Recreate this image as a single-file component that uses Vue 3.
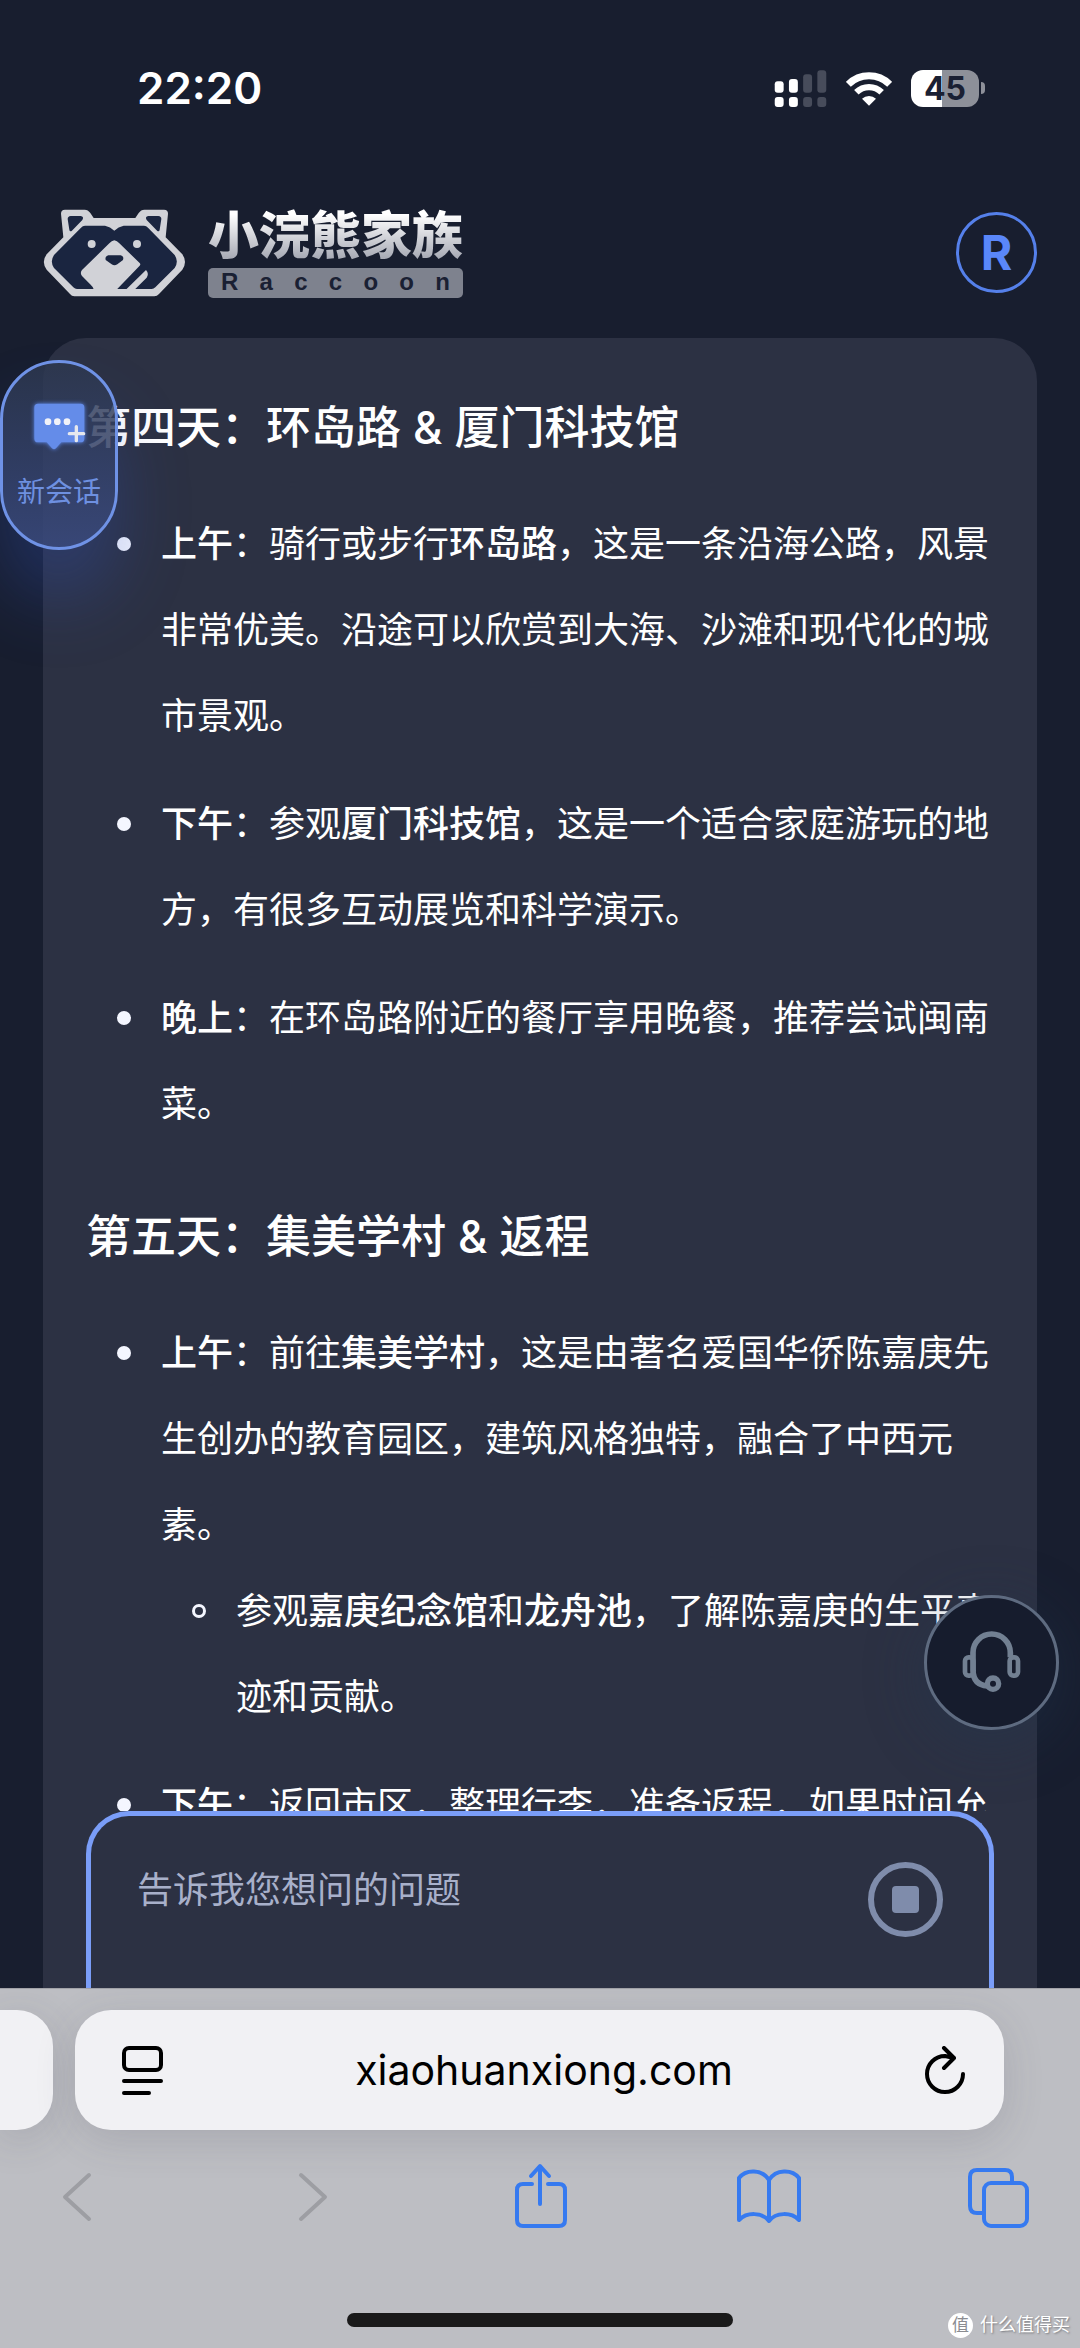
<script setup>
import { ref } from 'vue'

const question = ref('')
const brandLetters = 'Raccoon'.split('')

const days = [
  {
    title: '第四天：环岛路 & 厦门科技馆',
    items: [
      {
        parts: [
          { text: '上午', strong: true },
          { text: '：骑行或步行' },
          { text: '环岛路', strong: true },
          { text: '，这是一条沿海公路，风景非常优美。沿途可以欣赏到大海、沙滩和现代化的城市景观。' },
        ],
      },
      {
        parts: [
          { text: '下午', strong: true },
          { text: '：参观' },
          { text: '厦门科技馆', strong: true },
          { text: '，这是一个适合家庭游玩的地方，有很多互动展览和科学演示。' },
        ],
      },
      {
        parts: [
          { text: '晚上', strong: true },
          { text: '：在环岛路附近的餐厅享用晚餐，推荐尝试闽南菜。' },
        ],
      },
    ],
  },
  {
    title: '第五天：集美学村 & 返程',
    items: [
      {
        parts: [
          { text: '上午', strong: true },
          { text: '：前往' },
          { text: '集美学村', strong: true },
          { text: '，这是由著名爱国华侨陈嘉庚先生创办的教育园区，建筑风格独特，融合了中西元素。' },
        ],
        children: [
          [
            { text: '参观' },
            { text: '嘉庚纪念馆', strong: true },
            { text: '和' },
            { text: '龙舟池', strong: true },
            { text: '，了解陈嘉庚的生平事迹和贡献。' },
          ],
        ],
      },
      {
        parts: [
          { text: '下午', strong: true },
          { text: '：返回市区，整理行李，准备返程，如果时间允' },
        ],
      },
    ],
  },
]
</script>

<template>
  <div class="screen">
    <div class="status">
      <time class="clock">22:20</time>
      <div class="indicators">
        <svg class="signal" viewBox="102 56 160 112" aria-hidden="true">
          <g fill="#fff">
            <rect x="104" y="90" width="27" height="35" rx="9" />
            <rect x="147" y="83" width="27" height="42" rx="9" />
            <rect x="104" y="138" width="27" height="30" rx="9" />
            <rect x="147" y="138" width="27" height="30" rx="9" />
          </g>
          <g fill="#474c5b">
            <rect x="190" y="69" width="27" height="56" rx="9" />
            <rect x="233" y="57" width="27" height="68" rx="9" />
            <rect x="190" y="138" width="27" height="30" rx="9" />
            <rect x="233" y="138" width="27" height="30" rx="9" />
          </g>
        </svg>
        <svg class="wifi" viewBox="318 58 138 105" aria-hidden="true">
          <path d="M325 98a88 88 0 0 1 124 0" fill="none" stroke="#fff" stroke-width="21" />
          <path d="M349 122a54 54 0 0 1 76 0" fill="none" stroke="#fff" stroke-width="19" />
          <path d="M387 162l-21-21a31 31 0 0 1 42 0z" fill="#fff" />
        </svg>
        <div class="battery">
          <span class="level">45</span>
          <span class="cap"></span>
        </div>
      </div>
    </div>

    <header class="header">
      <a class="brand" href="#" aria-label="小浣熊家族">
        <svg class="logo" viewBox="40 56 429 264" aria-hidden="true">
          <path fill="#d1d2d7" d="M94 70Q94 58 106 58H165Q175 58 182 68L192 83H317L327 68Q334 58 344 58H403Q415 58 415 70L408 141L458 192Q474 215 458 238L388 311Q382 318 374 318H134Q126 318 121 311L51 238Q34 215 51 192L101 141Z" />
          <g fill="#1a2540">
            <path d="M123 77H153Q164 79 158 89L126 122Q120 125 119 118L114 86Q114 78 123 77Z" />
            <path d="M386 77H356Q345 79 351 89L383 122Q389 125 390 118L395 86Q395 78 386 77Z" />
            <path d="M166 106H226Q242 109 254 121Q266 109 282 106H343Q350 106 355 112L435 194Q448 214 435 233L377 291Q372 296 366 296H142Q136 296 131 291L73 233Q60 214 73 194L154 112Q159 106 166 106Z" />
          </g>
          <path fill="#d1d2d7" d="M254 150Q262 151 269 159L330 218Q334 222 330 226L262 297H192Q191 290 183 283L157 257Q150 248 157 239L239 159Q246 151 254 150ZM349 239Q359 249 351 262L316 297H290Z" />
          <path fill="#1a2540" d="M236 195H273Q284 198 280 209L263 222Q254 228 246 222L228 209Q225 198 236 195Z" />
          <circle cx="186" cy="161" r="12" fill="#d1d2d7" />
          <circle cx="322" cy="161" r="12" fill="#d1d2d7" />
        </svg>
        <span class="names">
          <span class="name">小浣熊家族</span>
          <span class="latin">
            <span v-for="(letter, i) in brandLetters" :key="i">{{ letter }}</span>
          </span>
        </span>
      </a>
      <button class="avatar" type="button" aria-label="账户">R</button>
    </header>

    <main class="main">
      <section class="card">
        <div class="messages">
          <article v-for="day in days" :key="day.title" class="day">
            <h3>{{ day.title }}</h3>
            <ul class="list">
              <li v-for="(item, i) in day.items" :key="i">
                <div class="body">
                  <p><template v-for="(part, j) in item.parts" :key="j"><strong v-if="part.strong">{{ part.text }}</strong><template v-else>{{ part.text }}</template></template></p>
                  <ul v-if="item.children" class="sublist">
                    <li v-for="(child, k) in item.children" :key="k">
                      <p class="body"><template v-for="(part, j) in child" :key="j"><strong v-if="part.strong">{{ part.text }}</strong><template v-else>{{ part.text }}</template></template></p>
                    </li>
                  </ul>
                </div>
              </li>
            </ul>
          </article>
        </div>
        <form class="composer" @submit.prevent>
          <input v-model="question" type="text" placeholder="告诉我您想问的问题" aria-label="告诉我您想问的问题" />
          <button class="stop" type="button" aria-label="停止"><span></span></button>
        </form>
      </section>
    </main>

    <button class="new-chat" type="button">
      <svg viewBox="80 205 186 186" aria-hidden="true">
        <path class="bubble" fill="#648ce9" d="M110 222H238Q249 222 249 233V327Q249 338 238 338H180L164 356Q158 362 152 356L136 338H110Q99 338 99 327V233Q99 222 110 222Z" />
        <g fill="#f1f2f8">
          <circle cx="140" cy="276" r="10" />
          <circle cx="168" cy="276" r="10" />
          <circle cx="197" cy="276" r="10" />
        </g>
        <path d="M225 291V333M204 312H247" stroke="#e6e8ee" stroke-width="10" stroke-linecap="round" />
      </svg>
      <span>新会话</span>
    </button>

    <button class="support" type="button" aria-label="客服">
      <svg viewBox="298 273 192 192" fill="none" stroke="#728092" aria-hidden="true">
        <path d="M337 350V338A56 56 0 0 1 449 338V352M337 345V392Q338 434 380 438" stroke-width="17" />
        <rect x="313" y="352" width="25" height="55" rx="11" stroke-width="14" />
        <rect x="447" y="352" width="25" height="55" rx="11" stroke-width="14" />
        <circle cx="397" cy="431" r="17" stroke-width="16" />
      </svg>
    </button>

    <footer class="browser">
      <div class="address-row">
        <div class="previous-tab"></div>
        <div class="address">
          <button class="address-icon" type="button" aria-label="页面菜单">
            <svg width="41" height="49" viewBox="0 0 41 49" fill="none" stroke="#000" stroke-width="4" stroke-linecap="round" aria-hidden="true">
              <rect x="2" y="2" width="37" height="22" rx="5" />
              <path d="M2 35H39M2 47H27" />
            </svg>
          </button>
          <button class="url" type="button">xiaohuanxiong.com</button>
          <button class="address-icon" type="button" aria-label="重新载入">
            <svg width="41" height="49" viewBox="0 0 41 49" fill="none" stroke="#000" stroke-width="4" stroke-linecap="round" stroke-linejoin="round" aria-hidden="true">
              <path d="M38 28A18 18 0 1 1 20 10L29 12M19 2L29 12L19 22" />
            </svg>
          </button>
        </div>
      </div>
      <nav class="toolbar">
        <button type="button" aria-label="后退" disabled>
          <svg viewBox="0 0 80 80"><path d="M51 19L27 41L51 63" /></svg>
        </button>
        <button type="button" aria-label="前进" disabled>
          <svg viewBox="0 0 80 80"><path d="M33 19L57 41L33 63" /></svg>
        </button>
        <button type="button" aria-label="分享">
          <svg viewBox="0 0 80 80"><path d="M33 28H24Q18 28 18 34V64Q18 70 24 70H60Q66 70 66 64V34Q66 28 60 28H49M41 48V11M32 20L41 10L50 20" /></svg>
        </button>
        <button type="button" aria-label="书签">
          <svg viewBox="0 0 80 80"><path d="M40 24C33 13 17 13 10 22V64C18 56 33 56 40 65C47 56 62 56 70 64V22C63 13 47 13 40 24V65" /></svg>
        </button>
        <button type="button" aria-label="标签页">
          <svg viewBox="0 0 80 80"><path d="M24 57H18Q11 57 11 50V21Q11 14 18 14H46Q53 14 53 21V27" /><rect x="25" y="27" width="43" height="43" rx="7" /></svg>
        </button>
      </nav>
      <div class="home-indicator"></div>
      <div class="watermark"><span class="seal">值</span><span>什么值得买</span></div>
    </footer>
  </div>
</template>

<style>
body {
  margin: 0;
  background: #181e2f;
}
</style>

<style scoped>
.screen {
  position: relative;
  display: flex;
  flex-direction: column;
  height: 100vh;
  overflow: hidden;
  background: #181e2f;
  color: #fff;
  font-family: Inter, "Noto Sans CJK SC", sans-serif;
  text-spacing-trim: space-all;
}

button {
  margin: 0;
  padding: 0;
  border: 0;
  background: none;
  color: inherit;
  font: inherit;
}

svg {
  display: block;
}

/* Status bar */
.status {
  display: flex;
  flex: none;
  align-items: center;
  justify-content: space-between;
  height: 176px;
  padding: 0 95px 0 137px;
  box-sizing: border-box;
}

.clock {
  font-size: 44px;
  font-weight: 600;
}

.indicators {
  display: flex;
  align-items: center;
  gap: 19px;
}

.signal {
  width: 53px;
  height: 37px;
}

.wifi {
  width: 46px;
  height: 35px;
}

.battery {
  display: flex;
  align-items: center;
  gap: 2px;
}

.level {
  width: 68px;
  border-radius: 12px;
  background: linear-gradient(90deg, #fff 45%, #8d9099 45%);
  color: #1a2033;
  font-size: 32px;
  font-weight: 700;
  line-height: 37px;
  text-align: center;
}

.cap {
  width: 4px;
  height: 12px;
  border-radius: 0 4px 4px 0;
  background: #8d9099;
}

/* Site header */
.header {
  display: flex;
  flex: none;
  align-items: flex-start;
  justify-content: space-between;
  height: 162px;
  padding: 33px 43px 0;
  box-sizing: border-box;
}

.brand {
  display: flex;
  gap: 22px;
  color: inherit;
  text-decoration: none;
}

.logo {
  width: 143px;
  height: 88px;
}

.names {
  display: flex;
  flex-direction: column;
  gap: 5px;
}

.name {
  background: linear-gradient(#fff 10%, #a4a7b2 95%);
  background-clip: text;
  color: transparent;
  font-size: 51px;
  font-weight: 900;
  line-height: 54px;
}

.latin {
  display: flex;
  justify-content: space-between;
  height: 30px;
  padding: 0 13px;
  border-radius: 5px;
  background: #7e828e;
  color: #1a2033;
  font-family: "Liberation Sans", Arial, sans-serif;
  font-size: 24px;
  font-weight: 700;
  line-height: 28px;
}

.avatar {
  width: 81px;
  height: 81px;
  margin-top: 3px;
  border: 3px solid #5580ea;
  border-radius: 50%;
  color: #5a87fa;
  font-size: 48px;
  font-weight: 700;
  line-height: 75px;
}

/* Conversation */
.main {
  display: flex;
  flex: 1;
  min-height: 0;
  padding: 0 43px;
}

.card {
  display: flex;
  flex: 1;
  flex-direction: column;
  min-width: 0;
  padding: 0 43px;
  border-radius: 43px 43px 0 0;
  background: #2c3143;
}

.messages {
  flex: 1;
  min-height: 0;
  overflow: hidden;
}

.day {
  padding-top: 56px;
}

h3 {
  margin: 0 0 39px;
  font-size: 45px;
  font-weight: 500;
  line-height: 68px;
}

ul {
  margin: 0;
  padding: 0;
  list-style: none;
}

.list {
  display: flex;
  flex-direction: column;
  gap: 22px;
}

li {
  display: flex;
  gap: 30px;
  padding-left: 31px;
}

li::before {
  content: "";
  flex: none;
  width: 14px;
  height: 14px;
  margin-top: 36px;
  border-radius: 50%;
  background: #f4f6ff;
}

.sublist li::before {
  border: 3px solid #f4f6ff;
  box-sizing: border-box;
  background: none;
}

.body {
  flex: 1;
  min-width: 0;
}

p {
  margin: 0;
  font-size: 36px;
  line-height: 86px;
}

strong {
  font-weight: 500;
}

.composer {
  display: flex;
  flex: none;
  align-items: flex-start;
  gap: 24px;
  padding: 46px 46px 51px;
  border: 5px solid #7a9df8;
  border-bottom: 0;
  border-radius: 43px 43px 0 0;
  background: #2c3143;
}

.composer input {
  flex: 1;
  min-width: 0;
  height: 56px;
  padding: 0;
  border: 0;
  outline: 0;
  background: none;
  color: #fff;
  font: inherit;
  font-size: 36px;
}

.composer input::placeholder {
  color: #a8b0ca;
  opacity: 1;
}

.stop {
  display: flex;
  align-items: center;
  justify-content: center;
  width: 75px;
  height: 75px;
  border: 6px solid #7f8cab;
  border-radius: 50%;
}

.stop span {
  width: 27px;
  height: 27px;
  border-radius: 4px;
  background: #7f8cab;
}

/* Floating buttons */
.new-chat {
  position: absolute;
  top: 360px;
  left: 0;
  display: flex;
  flex-direction: column;
  align-items: center;
  gap: 12px;
  width: 118px;
  height: 190px;
  padding-top: 35px;
  border: 3px solid #6f92e6;
  border-radius: 59px;
  box-sizing: border-box;
  background: linear-gradient(rgba(45, 56, 80, 0.82), rgba(52, 66, 108, 0.86) 60%, rgba(57, 73, 124, 0.9));
  box-shadow: 0 50px 70px rgba(50, 84, 190, 0.32);
  color: #6e90e0;
  font-size: 28px;
  line-height: 40px;
}

.new-chat svg {
  width: 62px;
  height: 62px;
}

.bubble {
  filter: drop-shadow(0 0 6px #5f8cf0);
}

.support {
  position: absolute;
  right: 21px;
  bottom: 618px;
  display: flex;
  align-items: center;
  justify-content: center;
  width: 135px;
  height: 135px;
  border: 3px solid #5e6b80;
  border-radius: 50%;
  background: #161c2d;
  box-shadow: 0 12px 60px rgba(32, 56, 80, 0.4);
}

.support svg {
  width: 64px;
  height: 64px;
}

/* Browser controls */
.browser {
  position: relative;
  flex: none;
  overflow: hidden;
  padding: 22px 0 21px;
  background: #bdbec3;
  box-shadow: inset 0 1px #a2a3a9;
}

.address-row {
  display: flex;
  gap: 22px;
  height: 120px;
  padding-right: 76px;
}

.previous-tab {
  width: 53px;
  border-radius: 0 36px 36px 0;
  background: #f1f1f4;
  box-shadow: 0 10px 40px rgba(60, 60, 80, 0.16);
}

.address {
  display: flex;
  flex: 1;
  align-items: center;
  justify-content: space-between;
  padding: 0 38px 0 47px;
  border-radius: 36px;
  background: #f1f1f4;
  box-shadow: 0 10px 40px rgba(60, 60, 80, 0.16);
  color: #000;
}

.url {
  font-size: 41px;
  line-height: 60px;
}

.toolbar {
  display: flex;
  justify-content: space-between;
  margin-top: 26px;
  padding: 0 41px 0 38px;
}

.toolbar svg {
  width: 80px;
  height: 80px;
  fill: none;
  stroke: #367af0;
  stroke-width: 4;
  stroke-linecap: round;
  stroke-linejoin: round;
}

.toolbar button:disabled svg {
  stroke: #9d9ea3;
}

.home-indicator {
  width: 386px;
  height: 14px;
  margin: 77px auto 0;
  border-radius: 7px;
  background: #1a1a1a;
}

.watermark {
  position: absolute;
  right: 10px;
  bottom: 10px;
  display: flex;
  align-items: center;
  gap: 7px;
  font-size: 18px;
  line-height: 26px;
  text-shadow: 1px 1px 2px #77787d;
}

.seal {
  width: 25px;
  height: 25px;
  border-radius: 50%;
  background: #fff;
  color: #8b8c91;
  font-size: 17px;
  line-height: 25px;
  text-align: center;
  text-shadow: none;
}
</style>
